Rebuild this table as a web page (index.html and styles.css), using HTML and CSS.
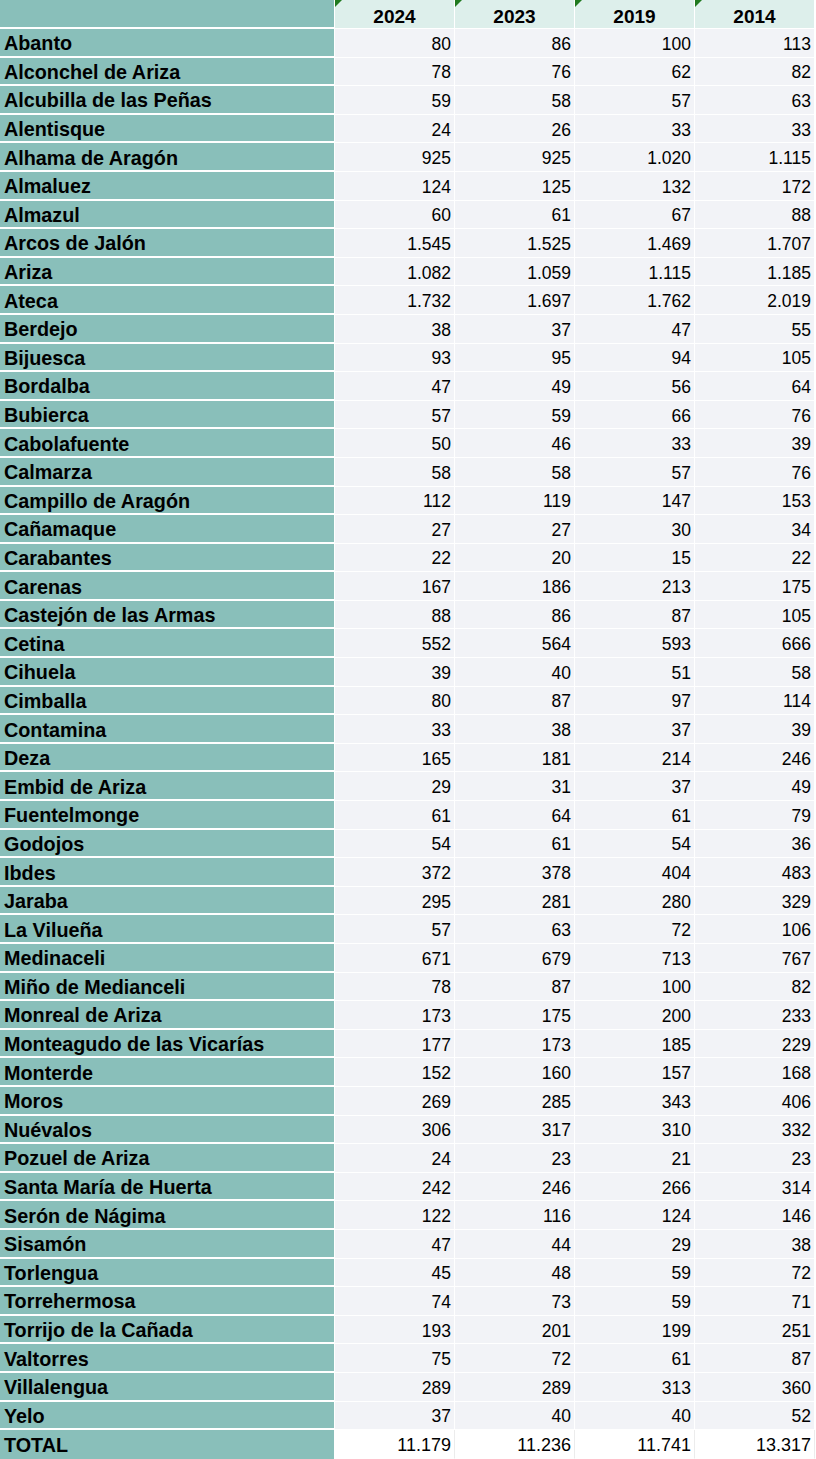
FILE: index.html
```html
<!DOCTYPE html>
<html lang="es">
<head>
<meta charset="utf-8">
<title>Población</title>
<link rel="stylesheet" href="styles.css">
</head>
<body>
<div class="sheet">
  <div class="row head">
    <div class="c name"></div>
    <div class="c year"><span class="mark"></span>2024</div>
    <div class="c year"><span class="mark"></span>2023</div>
    <div class="c year"><span class="mark"></span>2019</div>
    <div class="c year"><span class="mark"></span>2014</div>
  </div>
  <div class="row"><div class="c name">Abanto</div><div class="c num">80</div><div class="c num">86</div><div class="c num">100</div><div class="c num">113</div></div>
  <div class="row"><div class="c name">Alconchel de Ariza</div><div class="c num">78</div><div class="c num">76</div><div class="c num">62</div><div class="c num">82</div></div>
  <div class="row"><div class="c name">Alcubilla de las Peñas</div><div class="c num">59</div><div class="c num">58</div><div class="c num">57</div><div class="c num">63</div></div>
  <div class="row"><div class="c name">Alentisque</div><div class="c num">24</div><div class="c num">26</div><div class="c num">33</div><div class="c num">33</div></div>
  <div class="row"><div class="c name">Alhama de Aragón</div><div class="c num">925</div><div class="c num">925</div><div class="c num">1.020</div><div class="c num">1.115</div></div>
  <div class="row"><div class="c name">Almaluez</div><div class="c num">124</div><div class="c num">125</div><div class="c num">132</div><div class="c num">172</div></div>
  <div class="row"><div class="c name">Almazul</div><div class="c num">60</div><div class="c num">61</div><div class="c num">67</div><div class="c num">88</div></div>
  <div class="row"><div class="c name">Arcos de Jalón</div><div class="c num">1.545</div><div class="c num">1.525</div><div class="c num">1.469</div><div class="c num">1.707</div></div>
  <div class="row"><div class="c name">Ariza</div><div class="c num">1.082</div><div class="c num">1.059</div><div class="c num">1.115</div><div class="c num">1.185</div></div>
  <div class="row"><div class="c name">Ateca</div><div class="c num">1.732</div><div class="c num">1.697</div><div class="c num">1.762</div><div class="c num">2.019</div></div>
  <div class="row"><div class="c name">Berdejo</div><div class="c num">38</div><div class="c num">37</div><div class="c num">47</div><div class="c num">55</div></div>
  <div class="row"><div class="c name">Bijuesca</div><div class="c num">93</div><div class="c num">95</div><div class="c num">94</div><div class="c num">105</div></div>
  <div class="row"><div class="c name">Bordalba</div><div class="c num">47</div><div class="c num">49</div><div class="c num">56</div><div class="c num">64</div></div>
  <div class="row"><div class="c name">Bubierca</div><div class="c num">57</div><div class="c num">59</div><div class="c num">66</div><div class="c num">76</div></div>
  <div class="row"><div class="c name">Cabolafuente</div><div class="c num">50</div><div class="c num">46</div><div class="c num">33</div><div class="c num">39</div></div>
  <div class="row"><div class="c name">Calmarza</div><div class="c num">58</div><div class="c num">58</div><div class="c num">57</div><div class="c num">76</div></div>
  <div class="row"><div class="c name">Campillo de Aragón</div><div class="c num">112</div><div class="c num">119</div><div class="c num">147</div><div class="c num">153</div></div>
  <div class="row"><div class="c name">Cañamaque</div><div class="c num">27</div><div class="c num">27</div><div class="c num">30</div><div class="c num">34</div></div>
  <div class="row"><div class="c name">Carabantes</div><div class="c num">22</div><div class="c num">20</div><div class="c num">15</div><div class="c num">22</div></div>
  <div class="row"><div class="c name">Carenas</div><div class="c num">167</div><div class="c num">186</div><div class="c num">213</div><div class="c num">175</div></div>
  <div class="row"><div class="c name">Castejón de las Armas</div><div class="c num">88</div><div class="c num">86</div><div class="c num">87</div><div class="c num">105</div></div>
  <div class="row"><div class="c name">Cetina</div><div class="c num">552</div><div class="c num">564</div><div class="c num">593</div><div class="c num">666</div></div>
  <div class="row"><div class="c name">Cihuela</div><div class="c num">39</div><div class="c num">40</div><div class="c num">51</div><div class="c num">58</div></div>
  <div class="row"><div class="c name">Cimballa</div><div class="c num">80</div><div class="c num">87</div><div class="c num">97</div><div class="c num">114</div></div>
  <div class="row"><div class="c name">Contamina</div><div class="c num">33</div><div class="c num">38</div><div class="c num">37</div><div class="c num">39</div></div>
  <div class="row"><div class="c name">Deza</div><div class="c num">165</div><div class="c num">181</div><div class="c num">214</div><div class="c num">246</div></div>
  <div class="row"><div class="c name">Embid de Ariza</div><div class="c num">29</div><div class="c num">31</div><div class="c num">37</div><div class="c num">49</div></div>
  <div class="row"><div class="c name">Fuentelmonge</div><div class="c num">61</div><div class="c num">64</div><div class="c num">61</div><div class="c num">79</div></div>
  <div class="row"><div class="c name">Godojos</div><div class="c num">54</div><div class="c num">61</div><div class="c num">54</div><div class="c num">36</div></div>
  <div class="row"><div class="c name">Ibdes</div><div class="c num">372</div><div class="c num">378</div><div class="c num">404</div><div class="c num">483</div></div>
  <div class="row"><div class="c name">Jaraba</div><div class="c num">295</div><div class="c num">281</div><div class="c num">280</div><div class="c num">329</div></div>
  <div class="row"><div class="c name">La Vilueña</div><div class="c num">57</div><div class="c num">63</div><div class="c num">72</div><div class="c num">106</div></div>
  <div class="row"><div class="c name">Medinaceli</div><div class="c num">671</div><div class="c num">679</div><div class="c num">713</div><div class="c num">767</div></div>
  <div class="row"><div class="c name">Miño de Medianceli</div><div class="c num">78</div><div class="c num">87</div><div class="c num">100</div><div class="c num">82</div></div>
  <div class="row"><div class="c name">Monreal de Ariza</div><div class="c num">173</div><div class="c num">175</div><div class="c num">200</div><div class="c num">233</div></div>
  <div class="row"><div class="c name">Monteagudo de las Vicarías</div><div class="c num">177</div><div class="c num">173</div><div class="c num">185</div><div class="c num">229</div></div>
  <div class="row"><div class="c name">Monterde</div><div class="c num">152</div><div class="c num">160</div><div class="c num">157</div><div class="c num">168</div></div>
  <div class="row"><div class="c name">Moros</div><div class="c num">269</div><div class="c num">285</div><div class="c num">343</div><div class="c num">406</div></div>
  <div class="row"><div class="c name">Nuévalos</div><div class="c num">306</div><div class="c num">317</div><div class="c num">310</div><div class="c num">332</div></div>
  <div class="row"><div class="c name">Pozuel de Ariza</div><div class="c num">24</div><div class="c num">23</div><div class="c num">21</div><div class="c num">23</div></div>
  <div class="row"><div class="c name">Santa María de Huerta</div><div class="c num">242</div><div class="c num">246</div><div class="c num">266</div><div class="c num">314</div></div>
  <div class="row"><div class="c name">Serón de Nágima</div><div class="c num">122</div><div class="c num">116</div><div class="c num">124</div><div class="c num">146</div></div>
  <div class="row"><div class="c name">Sisamón</div><div class="c num">47</div><div class="c num">44</div><div class="c num">29</div><div class="c num">38</div></div>
  <div class="row"><div class="c name">Torlengua</div><div class="c num">45</div><div class="c num">48</div><div class="c num">59</div><div class="c num">72</div></div>
  <div class="row"><div class="c name">Torrehermosa</div><div class="c num">74</div><div class="c num">73</div><div class="c num">59</div><div class="c num">71</div></div>
  <div class="row"><div class="c name">Torrijo de la Cañada</div><div class="c num">193</div><div class="c num">201</div><div class="c num">199</div><div class="c num">251</div></div>
  <div class="row"><div class="c name">Valtorres</div><div class="c num">75</div><div class="c num">72</div><div class="c num">61</div><div class="c num">87</div></div>
  <div class="row"><div class="c name">Villalengua</div><div class="c num">289</div><div class="c num">289</div><div class="c num">313</div><div class="c num">360</div></div>
  <div class="row"><div class="c name">Yelo</div><div class="c num">37</div><div class="c num">40</div><div class="c num">40</div><div class="c num">52</div></div>
  <div class="row total"><div class="c name">TOTAL</div><div class="c num">11.179</div><div class="c num">11.236</div><div class="c num">11.741</div><div class="c num">13.317</div></div>
</div>
</body>
</html>
```

FILE: styles.css
```css
html, body {
  margin: 0;
  padding: 0;
  background: #ffffff;
}

.sheet {
  width: 816px;
  font-family: "Liberation Sans", Arial, sans-serif;
  color: #000000;
}

.row {
  display: grid;
  grid-template-columns: 335px 120px 120px 120px 120px;
  height: 28.6px;
}

.head {
  height: 29px;
}

.c {
  box-sizing: border-box;
  display: flex;
  align-items: center;
  padding-top: 3px;
  border-bottom: 1px solid #ffffff;
  border-right: 1px solid #ffffff;
  white-space: nowrap;
  overflow: hidden;
}

.name {
  background: #89bfba;
  font-weight: bold;
  font-size: 19.8px;
  padding-left: 4px;
  border-bottom: 2px solid #ffffff;
}

.num {
  background: #f2f3f7;
  justify-content: flex-end;
  padding-right: 3px;
  font-size: 17.5px;
}

.head .year {
  position: relative;
  background: #ddefeb;
  justify-content: center;
  font-weight: bold;
  font-size: 19px;
  padding-top: 5px;
}

.mark {
  position: absolute;
  top: 0;
  left: 0;
  width: 0;
  height: 0;
  border-top: 7px solid #1f7a1f;
  border-right: 7px solid transparent;
}

.total .num {
  background: #ffffff;
  border-right: 1px solid #ececec;
  font-size: 18px;
}

.total .name {
  border-bottom: none;
}
```
